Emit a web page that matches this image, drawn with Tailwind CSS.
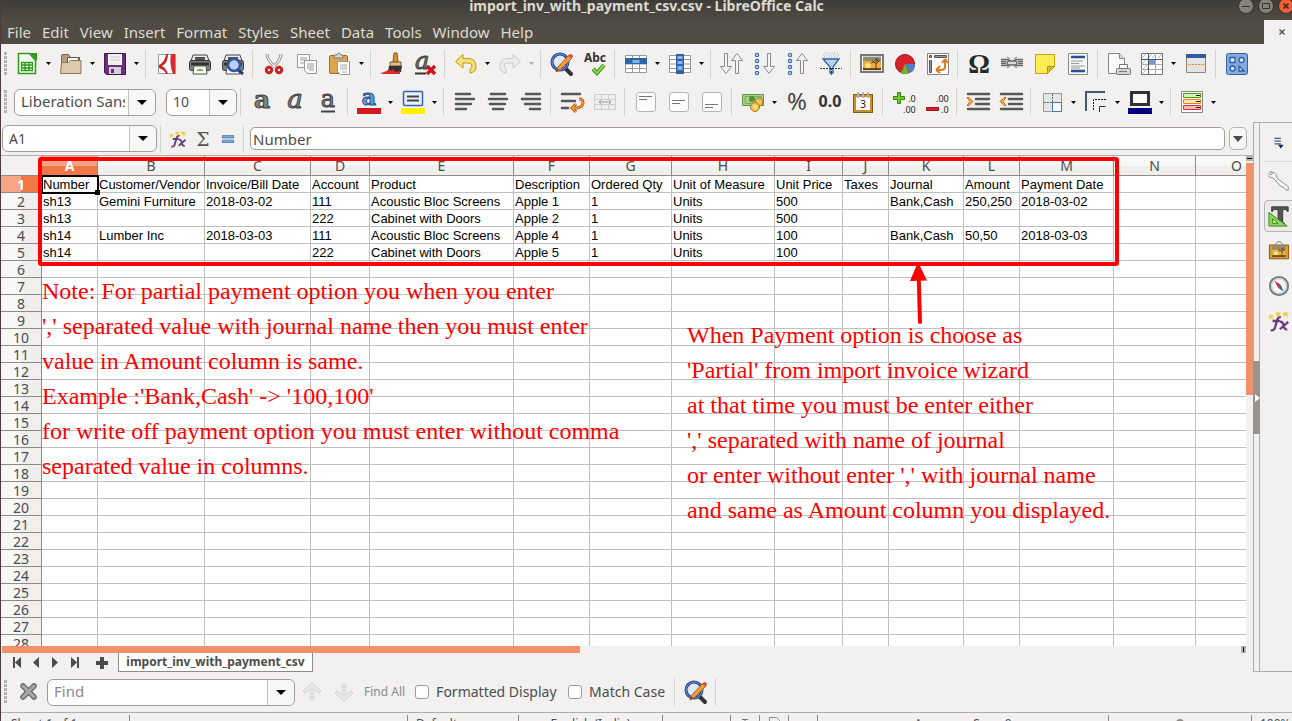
<!DOCTYPE html>
<html lang="en">

<head>
    <meta charset="UTF-8">
    <meta name="viewport" content="width=device-width, initial-scale=1.0">
    <title>import_inv_with_payment_csv.csv - LibreOffice Calc</title>
    <script src="https://cdn.jsdelivr.net/npm/@tailwindcss/browser@4"></script>
</head>

<body class="h-screen overflow-hidden flex flex-col border-l border-[#4b3a3e] bg-[#f2f1f0] font-['Noto_Sans',sans-serif] text-sm text-[#4c4c4c]">
    <!-- Window title -->
    <header class="relative h-5 shrink-0 bg-linear-to-b from-[#3d3c38] to-[#504c44]">
        <h1 class="text-center leading-3 font-bold text-[#dfdbd2]">import_inv_with_payment_csv.csv - LibreOffice Calc</h1>
        <div class="absolute -top-0.5 -right-0.5 flex gap-1">
            <button aria-label="Minimize" class="size-4"><svg viewBox="0 0 16 16"><circle cx="8" cy="8" r="7.5" fill="#85827a" stroke="#33322e"/><path d="M4 8.5h8" stroke="#33322e"/></svg></button>
            <button aria-label="Maximize" class="size-4"><svg viewBox="0 0 16 16"><circle cx="8" cy="8" r="7.5" fill="#85827a" stroke="#33322e"/><path d="M4.5 5.5h7v5h-7z" fill="none" stroke="#33322e"/></svg></button>
            <button aria-label="Close" class="size-4"><svg viewBox="0 0 16 16"><circle cx="8" cy="8" r="7.5" fill="#ee5f33" stroke="#33322e"/><path d="M5.500 5.500l5 5m0-5l-5 5" stroke="#3a2018" stroke-width="1.500"/></svg></button>
        </div>
    </header>

    <!-- Menu bar -->
    <nav class="flex h-6 shrink-0 items-center bg-[#504c44] text-[#dfdbd2]">
        <div class="flex flex-1 gap-[11px] pt-0.5 pl-1.5 text-[15px]">
            <a href="#">File</a>
            <a href="#">Edit</a>
            <a href="#">View</a>
            <a href="#">Insert</a>
            <a href="#">Format</a>
            <a href="#">Styles</a>
            <a href="#">Sheet</a>
            <a href="#">Data</a>
            <a href="#">Tools</a>
            <a href="#">Window</a>
            <a href="#">Help</a>
        </div>
        <button aria-label="Close document" class="flex h-full w-7 items-center justify-center bg-[#f2f1f0] pl-2"><svg class="size-2" viewBox="0 0 8 8"><path d="M1.500 1.500l5 5m0-5l-5 5" stroke="#4c4c4c" stroke-width="1.300"/></svg></button>
    </nav>

    <!-- Standard toolbar -->
    <div class="flex h-[39px] shrink-0 items-center pl-[3px]">
        <i class="mr-[3px] h-6 w-[3px] bg-[repeating-linear-gradient(#b5b3b0_0_3px,transparent_3px_4px)]"></i>
        <div id="standard" class="flex items-center"></div>
    </div>

    <!-- Formatting toolbar -->
    <div class="flex h-[38px] shrink-0 items-center pl-[3px]">
        <i class="mr-[7px] h-6 w-[3px] bg-[repeating-linear-gradient(#b5b3b0_0_3px,transparent_3px_4px)]"></i>
        <div class="mr-2.5 flex h-[27px] w-[142px] rounded-md border border-[#a19e99] bg-white">
            <input aria-label="Font name" value="Liberation Sans" class="ml-1.5 w-[104px] min-w-0 text-[15px] outline-none">
            <button aria-label="Choose font" class="ml-auto flex w-[27px] items-center justify-center rounded-r-md border-l border-[#c4c2be] bg-[#f7f7f6]"><svg class="h-[5px] w-2.5" viewBox="0 0 10 5"><path d="M0 0h10L5 5z"/></svg></button>
        </div>
        <div class="flex h-[27px] w-[71px] rounded-md border border-[#a19e99] bg-white">
            <input aria-label="Font size" value="10" class="ml-1.5 w-[34px] min-w-0 outline-none">
            <button aria-label="Choose size" class="ml-auto flex w-[27px] items-center justify-center rounded-r-md border-l border-[#c4c2be] bg-[#f7f7f6]"><svg class="h-[5px] w-2.5" viewBox="0 0 10 5"><path d="M0 0h10L5 5z"/></svg></button>
        </div>
        <div id="formatting" class="flex items-center"></div>
    </div>

    <div class="mt-px flex min-h-0 flex-1">
        <main class="flex min-w-0 flex-1 flex-col">
            <!-- Formula bar -->
            <div class="flex h-[33px] shrink-0 items-center pl-px">
                <div class="flex h-[27px] w-[155px] rounded-md border border-[#a19e99] bg-white">
                    <input aria-label="Name box" value="A1" class="ml-1.5 w-[116px] min-w-0 outline-none">
                    <button aria-label="Choose range" class="ml-auto flex w-[27px] items-center justify-center rounded-r-md border-l border-[#c4c2be] bg-[#f7f7f6]"><svg class="h-[5px] w-2.5" viewBox="0 0 10 5"><path d="M0 0h10L5 5z"/></svg></button>
                </div>
                <div id="formula" class="mr-0.5 flex items-center"></div>
                <input aria-label="Formula" value="Number" class="mr-1 h-[23px] min-w-0 flex-1 rounded-[5px] border border-[#a19e99] bg-white px-0.5 text-[15px]">
                <button aria-label="Expand formula bar" class="mr-1.5 flex h-[23px] w-[18px] items-center justify-center rounded-[5px] border border-[#b5b3b0] bg-[#f7f7f6]"><svg class="h-1.5 w-2.5" viewBox="0 0 10 6"><path d="M0 0h10L5 6z" fill="#4c4c4c"/></svg></button>
            </div>

            <!-- Spreadsheet -->
            <div class="flex min-h-0 flex-1 border-t border-[#b0aeab]">
                <div class="relative min-w-0 flex-1 overflow-hidden bg-white">
                    <table class="w-[1277px] table-fixed border-separate border-spacing-0">
                        <colgroup>
                            <col class="w-[41px]">
                            <col class="w-[56px]">
                            <col class="w-[107px]">
                            <col class="w-[106px]">
                            <col class="w-[59px]">
                            <col class="w-[144px]">
                            <col class="w-[76px]">
                            <col class="w-[82px]">
                            <col class="w-[103px]">
                            <col class="w-[68px]">
                            <col class="w-[46px]">
                            <col class="w-[75px]">
                            <col class="w-[56px]">
                            <col class="w-[94px]">
                            <col class="w-[82px]">
                            <col class="w-[82px]">
                        </colgroup>
                        <thead>
                            <tr id="letters"></tr>
                        </thead>
                        <tbody id="cells" class="font-['Liberation_Sans',Arial,sans-serif] text-[13px] text-black"></tbody>
                    </table>

                    <!-- Cell cursor -->
                    <div class="absolute top-[19px] left-10 h-[19px] w-[58px] border-2 border-black"></div>
                    <div class="absolute top-[34px] left-[94px] size-[5px] bg-black"></div>

                    <!-- Notes drawn over the sheet -->
                    <div class="absolute top-px left-[37px] h-[109px] w-[1081px] rounded-[3px] border-4 border-[#f00]"></div>
                    <svg class="absolute top-[106px] left-[909px] h-[62px] w-[17px]" viewBox="0 0 17 62" fill="#f00"><path d="M8 0L17 18.500L0 19z"/><path d="M8.700 15L10 60" stroke="#f00" stroke-width="4" stroke-linecap="round"/></svg>
                    <p class="absolute top-[118px] left-[41px] font-['Liberation_Serif',serif] text-2xl leading-[35px] whitespace-nowrap text-[#f00]">
                        Note: For partial payment option you when you enter<br>
                        ',' separated value with journal name then you must enter<br>
                        value in Amount column is same.<br>
                        Example :'Bank,Cash' -&gt; '100,100'<br>
                        for write off payment option you must enter without comma<br>
                        separated value in columns.
                    </p>
                    <p class="absolute top-[162px] left-[686px] font-['Liberation_Serif',serif] text-2xl leading-[35px] whitespace-nowrap text-[#f00]">
                        When Payment option is choose as<br>
                        'Partial' from import invoice wizard<br>
                        at that time you must be enter either<br>
                        ',' separated with name of journal<br>
                        or enter without enter ',' with journal name<br>
                        and same as Amount column you displayed.
                    </p>
                </div>
                <!-- Vertical scrollbar -->
                <div class="flex w-[7px] flex-col">
                    <i class="flex h-[5px] items-center justify-center bg-[#b5b3b0]"><b class="h-px w-[5px] bg-black"></b></i>
                    <i class="mt-0.5 h-[232px] bg-[#f29069]"></i>
                </div>
            </div>

            <!-- Horizontal scrollbar -->
            <div class="flex h-[7px] shrink-0 items-center justify-between pr-[7px] pl-px">
                <i class="h-full w-[578px] bg-[#f29069]"></i>
                <i class="flex h-full w-[5px] items-center justify-center bg-[#b5b3b0]"><b class="h-[5px] w-px bg-black"></b></i>
            </div>

            <!-- Sheet tabs -->
            <div class="flex h-[19px] shrink-0 items-center pl-[11px]">
                <div class="flex items-center gap-2">
                    <button aria-label="First sheet" class="size-[11px]"><svg viewBox="0 0 11 11" fill="#4c4c4c"><path d="M1 0h2v11H1zM9 0v11L3 5.500z"/></svg></button>
                    <button aria-label="Previous sheet" class="size-[11px]"><svg viewBox="0 0 11 11" fill="#4c4c4c"><path d="M8 0v11L2 5.500z"/></svg></button>
                    <button aria-label="Next sheet" class="size-[11px]"><svg viewBox="0 0 11 11" fill="#4c4c4c"><path d="M2 0v11L8 5.500z"/></svg></button>
                    <button aria-label="Last sheet" class="size-[11px]"><svg viewBox="0 0 11 11" fill="#4c4c4c"><path d="M8 0h2v11H8zM2 0v11L8 5.500z"/></svg></button>
                </div>
                <button aria-label="Add sheet" class="mr-2.5 ml-4 size-3"><svg viewBox="0 0 12 12" fill="#4c4c4c"><path d="M4 0h4v4h4v4H8v4H4V8H0V4h4z"/></svg></button>
                <button class="h-full w-[195px] border border-t-0 border-[#8e8b87] bg-white text-xs leading-4 font-bold">import_inv_with_payment_csv</button>
            </div>
        </main>

        <!-- Sidebar -->
        <div class="relative flex w-[7px] shrink-0 items-center border-x border-t border-b border-[#b0aeab] bg-[#f2f1f0]">
            <button aria-label="Hide sidebar" class="absolute top-[238px] -left-px flex h-[73px] w-[7px] items-center justify-end bg-[#98948e]"><svg class="h-2 w-[5px]" viewBox="0 0 5 8"><path d="M0 0l5 4l-5 4z" fill="#fff"/></svg></button>
        </div>
        <aside id="sidebar" class="flex w-8 shrink-0 flex-col gap-[3px] border-t border-b border-[#b0aeab] pl-1"></aside>
    </div>

    <!-- Find toolbar -->
    <div class="flex h-10 shrink-0 items-center pl-[3px]">
        <i class="mr-3 h-6 w-[3px] bg-[repeating-linear-gradient(#b5b3b0_0_3px,transparent_3px_4px)]"></i>
        <button aria-label="Close find bar" class="mr-2 size-5"><svg viewBox="0 0 20 20"><path d="M4 4l11 11m0-11l-11 11" stroke="#666" stroke-width="5.500" stroke-linecap="round"/><path d="M4 4l11 11m0-11l-11 11" stroke="#aaa" stroke-width="3" stroke-linecap="round"/></svg></button>
        <div class="flex h-[27px] w-[248px] rounded-md border border-[#a19e99] bg-white">
            <input aria-label="Find" placeholder="Find" class="ml-1.5 min-w-0 flex-1 text-[15px] outline-none placeholder:text-[#8b8b8b]">
            <button aria-label="Find history" class="flex w-[27px] items-center justify-center rounded-r-md border-l border-[#c4c2be] bg-[#f7f7f6]"><svg class="h-[5px] w-2.5" viewBox="0 0 10 5"><path d="M0 0h10L5 5z"/></svg></button>
        </div>
        <button aria-label="Find previous" class="ml-[7px] size-5"><svg viewBox="0 0 20 20" fill="none" stroke="#d3d1ce"><path d="M10 1l9 8-2 2-7-5-7 5-2-2z" fill="#ebeae8"/><path d="M8 10l2-2 2 2v2H8zM8 14h4v2H8zM9 18h2"/></svg></button>
        <button aria-label="Find next" class="ml-3 size-5"><svg viewBox="0 0 20 20" fill="none" stroke="#d3d1ce"><path d="M10 19l9-8-2-2-7 5-7-5-2 2z" fill="#ebeae8"/><path d="M8 10l2 2 2-2V8H8zM8 4h4v2H8zM9 2h2"/></svg></button>
        <button class="mx-2.5 text-xs text-[#8b8b8b]">Find All</button>
        <label class="flex w-[153px] items-center gap-[7px] whitespace-nowrap"><input type="checkbox" class="size-3.5 shrink-0 appearance-none rounded-[3px] border border-[#a19e99] bg-white">Formatted Display</label>
        <label class="flex w-[103px] items-center gap-[7px] whitespace-nowrap"><input type="checkbox" class="size-3.5 shrink-0 appearance-none rounded-[3px] border border-[#a19e99] bg-white">Match Case</label>
        <div id="findtools" class="flex items-center"></div>
    </div>

    <!-- Status bar -->
    <footer class="h-[9px] shrink-0 overflow-hidden border-t border-[#b0aeab] text-xs">
        <div class="flex pt-0.5 leading-[18px] whitespace-nowrap">
            <span class="w-[129px] border-r border-[#8e8b87] pl-2.5">Sheet 1 of 1</span>
            <span class="w-[278px] border-r border-[#8e8b87]"></span>
            <span class="w-[111px] border-r border-[#8e8b87] pl-2">Default</span>
            <span class="w-[144px] border-r border-[#8e8b87] text-center">English (India)</span>
            <span class="w-[68px] border-r border-[#8e8b87]"></span>
            <span class="flex w-[29px] justify-center border-r border-[#8e8b87]"><svg class="mt-1 size-3" viewBox="0 0 12 12"><path d="M3 .5h6M6 0v12" stroke="#777"/></svg></span>
            <span class="flex w-[29px] justify-center border-r border-[#8e8b87]"><svg class="mt-0.5 size-3" viewBox="0 0 12 12"><path d="M1.500 12V.5h7l3 3V12" fill="none" stroke="#8e8b87"/></svg></span>
            <span class="w-[29px] border-r border-[#8e8b87]"></span>
            <span class="flex-1 border-r border-[#8e8b87] text-center">Average: ; Sum: 0</span>
            <span class="flex w-[143px] justify-center border-r border-[#8e8b87]"><svg class="mt-1 size-2" viewBox="0 0 8 8"><circle cx="4" cy="4" r="4" fill="#8e8b87"/></svg></span>
            <span class="w-10 pl-2">100%</span>
        </div>
    </footer>

    <script>
        const lens = '<path d="M16 17l5 5" stroke="#333" stroke-width="4" stroke-linecap="round"/><circle cx="10" cy="10" r="8" fill="#dfe9f5" stroke="#26468f" stroke-width="3"/><circle cx="10" cy="10" r="8" fill="none" stroke="#6e93d6"/><path d="M6 20l2-5L19 3l3 3L11 17z" fill="#f59a35" stroke="#a85c12"/><path d="M18 4l2-2q3 0 3 3l-2 1z" fill="#e24b4b"/><path d="M6 20l1-3 2 1z" fill="#5b3a1a"/>';
        const fx = '<path d="M3 22q4 1 5-4l2-7q1-4 4-3M5 12h8" fill="none" stroke="#6b3d7d" stroke-width="2.500"/><path d="M13 13q3-1 4 4t4 4m1-8l-9 8" fill="none" stroke="#6b3d7d" stroke-width="2.500"/><path d="M3 4l1 2 2 0-1 2 1 2-3-1-2 1 0-3-1-1 2 0zM11 1l1 2h2l-1 2 0 2-2-1-2 1v-2l-1-2h2zM19 1l1 2h3l-2 2 1 3-3-2-2 2v-3l-2-2h3z" fill="#f2d13b"/>';
        const printer = '<path d="M5 3h14l2 6H3z" fill="#e9e9e7" stroke="#444"/><path d="M7 5h10v4H7z" fill="#555"/><rect x="1.500" y="8.500" width="21" height="10" rx="2" fill="#80827e" stroke="#333"/><path d="M3 12h18" stroke="#333" stroke-width="3"/><path d="M6 14h12l1 8H5z" fill="#fafafa" stroke="#555"/><path d="M8 19q4-5 8 0z" fill="#7cb850"/>';
        const landscape = '<path d="M3 4h18v15H3z" fill="#8b8d7a"/><path d="M3 9h18v8H3z" fill="#f2a93a"/><circle cx="8" cy="14" r="3" fill="#ffe680"/><path d="M3 17h18v2H3z" fill="#5b3a14"/><path d="M16 18v-6l-4-4m4 4l4-4m-4 3V6m2 4l-1-4m-3 4l-3 1" stroke="#2d2213" stroke-width=".8" fill="none"/>';
        const lines = (a) => a.map(([x, y, w]) => `<path d="M${x} ${y}h${w}" stroke="#555856" stroke-width="2.500" stroke-linecap="round"/>`).join('');
        const box = (a) => '<rect x="2.500" y="2.500" width="19" height="19" rx="2.500" fill="#fdfdfd" stroke="#b5b4b2"/>' + a.map(([x, y, w]) => `<path d="M${x} ${y}h${w}" stroke="#777"/>`).join('');
        const down = (x) => `<path d="M${x - 1.5} 1.500v13h-4l5.500 7 5.500-7h-4v-13z" fill="#f4f4f3" stroke="#8b8b88"/>`;
        const up = (x) => `<path d="M${x - 1.5} 21.500v-13h-4l5.500-7 5.500 7h-4v13z" fill="#f4f4f3" stroke="#8b8b88"/>`;
        const dots = '<g fill="#e1ebf7" stroke="#3c6cab" stroke-width="1.300"><circle cx="4" cy="3" r="1.600"/><circle cx="4" cy="9" r="1.600"/><circle cx="4" cy="15" r="1.600"/><circle cx="4" cy="21" r="1.600"/></g>';
        const lineGrid = '<path d="M1.500 3.500h21v17h-21zM1 7.500h22M1 12h22M1 16.500h22M8.500 3v18M15.500 3v18" fill="#fff" stroke="#999"/>';

        const icons = {
            'New': '<path d="M3.500 1.500h11l6 7v13h-17z" fill="#fbfffa" stroke="#2c9a17" stroke-width="1.500"/><path d="M15 1h7v8z" fill="#2c9a17"/><path d="M6.500 10.500h11v8h-11zM6 13h12M6 16h12M10 10v9M14 10v9" fill="#fff" stroke="#2c9a17" stroke-width="1.300"/>',
            'Open': '<path d="M2.500 20V3.500q0-1 1-1h6l2 3h9V20z" fill="#b59d7d" stroke="#7b6548"/><path d="M8.500 5.500h11v6h-11z" fill="#fff" stroke="#555"/><path d="M1.500 21.500l1-11h7l2-2h10.500v13z" fill="#dcc9ac" stroke="#8f7858"/>',
            'Save': '<path d="M1.500 1.500h21v21h-19l-2-2z" fill="#6b2f80" stroke="#421453"/><path d="M5 2h14v11H5z" fill="#f2f2f2"/><path d="M7 5h10M7 8h10" stroke="#c8c8c8"/><path d="M6 15h12v7H6z" fill="#d3d3d3"/><path d="M8 17h3v4H8z" fill="#6b2f80"/>',
            'Export as PDF': '<path d="M3.500 2.500h17v19h-17z" fill="#fff" stroke="#999"/><path d="M13 2h-2q-1 8-7 11v3q6 2 7 6h2q-2-6-6-8 6-3 6-12z" fill="#c9232a"/><path d="M16 2h4v20h-2q-4-10-2-20z" fill="#d92a30"/>',
            'Print': printer,
            'Print Preview': printer + '<path d="M17 18l5 4" stroke="#263c75" stroke-width="3"/><circle cx="13" cy="13" r="6" fill="#b9cfe9" stroke="#2f55a8" stroke-width="2.500"/>',
            'Cut': '<path d="M5 2q0 6 8 13M19 2q0 6-8 13" stroke="#8b8b88" stroke-width="3" fill="none"/><path d="M5 2q0 6 8 13M19 2q0 6-8 13" stroke="#f1f1f0" stroke-width="1.300" fill="none"/><g fill="none" stroke="#cf1f26" stroke-width="3"><circle cx="7" cy="18" r="2.700"/><circle cx="17" cy="18" r="2.700"/></g>',
            'Copy': '<g fill="#fcfcfc" stroke="#999"><path d="M2.500 2.500h12v13h-12z"/><path d="M9.500 8.500h12v13h-9l-3-3z"/></g><path d="M5 6h7M5 8h7M5 11h4M12 12h7M12 14h7M12 16h7M14 18h5" stroke="#999"/>',
            'Paste': '<rect x="1.500" y="3.500" width="18" height="18" rx="1.500" fill="#dda550" stroke="#9c6e28"/><path d="M6 6V3h3q2-4 4 0h2v3z" fill="#d8d8d6" stroke="#777"/><path d="M9.500 9.500h12v13h-9l-3-3z" fill="#fff" stroke="#999"/><path d="M12 13h7M12 15h7M12 17h7M14 20h5" stroke="#aaa"/>',
            'Clone Formatting': '<path d="M14 1h3l1 9h-5z" fill="#e0932f" stroke="#8b5510"/><path d="M10 10h11v4H10z" fill="#e6c088" stroke="#7a5a28"/><path d="M9 14h13l-1 6H8z" fill="#333"/><path d="M0 21q6-1 9-4l2 2 2-2 2 3 5-1v3H3z" fill="#d92a30"/>',
            'Clear Formatting': '<text x="2" y="17" font-family="DejaVu Serif" font-style="italic" font-size="24" fill="#6f7270" stroke="#444">a</text><path d="M2 21.500h11" stroke="#333" stroke-width="2"/><path d="M14 14l8 8m0-8l-8 8" stroke="#d0141b" stroke-width="3.500"/>',
            'Undo': '<path d="M1.500 9.500L9 2.500v4h5q8 0 8 8 0 6-6 6.500v-4q2-1 2-3 0-3-4-3H9v5z" fill="#f7e07a" stroke="#b99a12"/>',
            'Redo': '<path d="M22.500 9.500L15 2.500v4h-5q-8 0-8 8 0 6 6 6.500v-4q-2-1-2-3 0-3 4-3h5v5z" fill="#ececeb" stroke="#cbc9c6"/>',
            'Find &amp; Replace': lens,
            'Spelling': '<text x="12" y="10" text-anchor="middle" font-family="Noto Sans" font-weight="bold" font-size="12" fill="#333">Abc</text><path d="M10 17l4 4 7-8" fill="none" stroke="#3a8a1a" stroke-width="4"/><path d="M10 17l4 4 7-8" fill="none" stroke="#8cdc4c" stroke-width="2"/>',
            'Row': lineGrid + '<path d="M1 6h22v6H1z" fill="#2e63a8"/><path d="M8.500 8h7v3h-7z" fill="#86b2e6"/>',
            'Column': lineGrid + '<path d="M8 2h8v20H8z" fill="#2e63a8"/><path d="M9.500 4h5v3h-5zM9.500 9h5v3h-5zM9.500 14h5v4h-5z" fill="#86b2e6"/>',
            'Sort': down(6) + up(17),
            'Sort Ascending': dots + down(16),
            'Sort Descending': dots + up(16),
            'AutoFilter': '<path d="M5 1h14M4 3h16M5 5h14" stroke="#aaa" stroke-dasharray="1 1.500"/><path d="M4 7h16l-6 8v6h-3v-6z" fill="#b8d3f2" stroke="#2f62a6" stroke-width="1.300"/><path d="M1 16.500h22M12.500 16v7" stroke="#333" stroke-dasharray="2 1"/>',
            'Insert Image': '<rect x="1" y="3" width="22" height="17" fill="#fff" stroke="#777" stroke-width="2"/><g transform="translate(0 1) scale(1 .9)">' + landscape + '</g>',
            'Insert Chart': '<circle cx="12" cy="12" r="9.500" fill="#d9222a" stroke="#9b1016"/><path d="M12 12h10q0 7-5 9z" fill="#4f81c8"/><path d="M12 12l4 9q-4 2-8 0z" fill="#69b82e"/>',
            'Pivot Table': '<path d="M1.500 1.500h21v21h-21z" fill="#fff" stroke="#888"/><path d="M3.500 3.500h2v2h-2zM8.500 3.500h12v2h-12zM3.500 8.500h2v12h-2z" fill="#999" stroke="#555"/><path d="M19 9v6q0 3-5 3h-3m8-11l-3 4m3-4l3 4M10 18l4-4m-4 4l4 3" fill="none" stroke="#e27816" stroke-width="2"/>',
            'Special Character': '<text x="12" y="21" text-anchor="middle" font-family="Liberation Serif" font-weight="bold" font-size="27" fill="#222b2b">Ω</text>',
            'Hyperlink': '<g fill="none" stroke="#666" stroke-width="1.300"><path d="M1 7.500h7l3 2M1 13.500h7l3-2M23 7.500h-7l-3 2M23 13.500h-7l-3-2"/><path d="M1 9.500h5M1 11.500h5M18 9.500h5M18 11.500h5"/><rect x="7" y="9" width="10" height="4" rx="2" fill="#ddd"/><path d="M7 16l3-2M17 16l-3-2M7 5l3 2M17 5l-3 2" stroke="#999"/></g>',
            'Comment': '<path d="M2.500 2.500h19v12l-7 7h-12z" fill="#fbec55" stroke="#c7a50d"/><path d="M14.500 21.500v-7h7z" fill="#d6bd25" stroke="#b6930d"/>',
            'Headers and Footers': '<path d="M2.500 1.500h19v21h-19z" fill="#f7f7f7" stroke="#888"/><path d="M5 5h14M5 19h14" stroke="#294f93" stroke-width="2.500"/><path d="M5 9h12M5 11.500h8M5 14h14M5 16h9" stroke="#999"/>',
            'Print Area': '<path d="M1.500 1.500h11l5 5v15h-16z" fill="#fafafa" stroke="#888"/><path d="M12.500 1.500v5h5" fill="#ddd" stroke="#888"/><path d="M12.500 12.500h8v5h-8z" fill="#fff" stroke="#777"/><rect x="9.500" y="16.500" width="14" height="6" rx="1" fill="#d3d5d0" stroke="#777"/><path d="M12 19.500h8" stroke="#777"/>',
            'Freeze': '<path d="M1.500 1.500h21v21h-21z" fill="#fff" stroke="#777"/><path d="M2 6l4-4M2 12L12 2M2 18l6-6M12 6l4-4M18 6l4-4M2 22l6-6" stroke="#9cc0e6"/><path d="M8.500 1v21M15.500 1v21M1 7.500h21M1 12.500h21M1 17.500h21" stroke="#aaa"/><path d="M8.500 1v21M1 7.500h21" stroke="#555"/><path d="M9 8h6v4H9z" fill="#6f9fdb"/>',
            'Split Window': '<path d="M2.500 2.500h19v18h-19z" fill="#e4e5e3" stroke="#888"/><path d="M2 4h20" stroke="#2e5da5" stroke-width="4"/><path d="M2 12.500h20" stroke="#f08a1d" stroke-dasharray="2 1"/>',
            'Draw Functions': '<rect x="1.500" y="1.500" width="21" height="21" rx="2" fill="#84abe0" stroke="#2f62b0"/><g fill="#dce8f8" stroke="#2f5da0" stroke-width="1.300"><path d="M5 5.500h5v5H5zM14 19v-5l5 5z"/><circle cx="16.500" cy="8" r="2.500"/><circle cx="7.500" cy="16.500" r="2.500"/></g>',

            'Bold': '<text x="12" y="18" text-anchor="middle" font-family="DejaVu Serif" font-weight="bold" font-size="25" fill="#7f8280" stroke="#444">a</text>',
            'Italic': '<text x="12" y="18" text-anchor="middle" font-family="DejaVu Serif" font-style="italic" font-size="26" fill="#7f8280" stroke="#444">a</text>',
            'Underline': '<text x="12" y="17" text-anchor="middle" font-family="DejaVu Serif" font-size="24" fill="#7f8280" stroke="#444">a</text><path d="M5 21.500h14" stroke="#444" stroke-width="2"/>',
            'Font Color': '<text x="12" y="15" text-anchor="middle" font-family="DejaVu Serif" font-weight="bold" font-size="22" fill="#6b9ad6" stroke="#264f91">a</text><path d="M0 18h24v6H0z" fill="#d01a20"/>',
            'Highlighting Color': '<rect x="2.500" y="1.500" width="19" height="14" rx="1" fill="#eaf1fa" stroke="#3265aa" stroke-width="1.500"/><path d="M6 6.500h12M6 10.500h12" stroke="#444" stroke-width="2"/><path d="M0 18h24v6H0z" fill="#ffef00"/>',
            'Align Left': lines([[3, 4, 14], [3, 9, 18], [3, 14, 15], [3, 19, 10]]),
            'Center': lines([[5, 4, 14], [3, 9, 18], [4, 14, 15], [7, 19, 10]]),
            'Align Right': lines([[7, 4, 14], [3, 9, 18], [6, 14, 15], [11, 19, 10]]),
            'Wrap Text': lines([[2, 4, 18], [2, 11, 13], [2, 18, 6]]) + '<path d="M19 9q4 0 4 4t-6 5h-5m4-4l-4 4 4 4" fill="none" stroke="#c6610b" stroke-width="3"/><path d="M19 9q4 0 4 4t-6 5h-5m4-4l-4 4 4 4" fill="none" stroke="#fbb35c"/>',
            'Merge Cells': '<path d="M1.500 4.500h21v15h-21zM1 9.500h22M1 14.500h22M8.500 4v5M15.500 4v5M8.500 15v5M15.500 15v5" fill="#eee" stroke="#cfcecc"/><path d="M6 12h12M8 10l-2 2 2 2M16 10l2 2-2 2" fill="none" stroke="#999"/>',
            'Align Top': box([[5, 6.500, 13], [5, 9.500, 8]]),
            'Center Vertically': box([[5, 10.500, 13], [5, 13.500, 8]]),
            'Align Bottom': box([[5, 14.500, 13], [5, 17.500, 8]]),
            'Currency': '<path d="M1.500 4.500h21v11h-21z" fill="#a8d18d" stroke="#5b9840"/><path d="M4 6.500h16v7H4z" fill="none" stroke="#74ad57"/><circle cx="11" cy="9" r="3" fill="#568d3d"/><g fill="#edc654" stroke="#a37b16"><circle cx="18" cy="12" r="4"/><circle cx="14" cy="17" r="4.500"/></g><circle cx="14" cy="17" r="2" fill="#f9e392"/>',
            'Percent': '<text x="12" y="20" text-anchor="middle" font-family="Noto Sans" font-size="24" fill="#444">%</text>',
            'Number': '<text x="12" y="17" text-anchor="middle" font-family="Noto Sans" font-weight="bold" font-size="16" fill="#333">0.0</text>',
            'Date': '<rect x="2.500" y="4.500" width="19" height="18" fill="#cc8f30" stroke="#80591b"/><path d="M5 7h14v13H5z" fill="#fafafa"/><path d="M7 2v6M12 2v6M17 2v6" stroke="#777" stroke-width="2"/><path d="M7 2v6M12 2v6M17 2v6" stroke="#eee"/><text x="12" y="18" text-anchor="middle" font-family="Noto Sans" font-size="10" fill="#222">3</text>',
            'Add Decimal Place': '<path d="M5.500 2.500h3v4h4v3h-4v4h-3v-4h-4v-3h4z" fill="#73c92b" stroke="#37850c"/><g font-family="Noto Sans" font-size="9" fill="#222"><text x="16" y="12">.0</text><text x="11" y="23">.00</text></g>',
            'Delete Decimal Place': '<path d="M1.500 17.500h12v3h-12z" fill="#d9222a" stroke="#9b1016"/><g font-family="Noto Sans" font-size="9" fill="#222"><text x="11" y="12">.00</text><text x="16" y="23">.0</text></g>',
            'Increase Indent': lines([[2, 4, 21], [10, 9, 13], [10, 14, 13], [2, 19, 21]]) + '<path d="M1 7.500h2l4 4-4 4H1l3-4z" fill="#f8b15d" stroke="#cf6b12"/>',
            'Decrease Indent': lines([[2, 4, 21], [10, 9, 13], [10, 14, 13], [2, 19, 21]]) + '<path d="M7 7.500H5l-4 4 4 4h2l-3-4z" fill="#f8b15d" stroke="#cf6b12"/>',
            'Borders': '<path d="M3.500 3.500h18v18h-18z" fill="#e5e7e5" stroke="#999"/><path d="M12.500 12.500h9v9h-9z" fill="#fff" stroke="#4a76b4"/><path d="M12.500 4v8M4 12.500h8" stroke="#666" stroke-dasharray="2 1"/>',
            'Border Style': '<path d="M2 21V2h19" fill="none" stroke="#3d5878" stroke-width="2"/><path d="M9.500 20V9.500h13" fill="none" stroke="#111" stroke-dasharray="2 1"/><path d="M15.500 22v-5.500h6" fill="none" stroke="#333"/>',
            'Border Color': '<path d="M3.500 2.500h17v12h-17z" fill="#fafafa" stroke="#333" stroke-width="3"/><path d="M0 18h24v6H0z" fill="#000080"/>',
            'Conditional': '<path d="M1.500 1.500h21v21h-21z" fill="#fafafa" stroke="#888"/><path d="M3.500 3.500h17v4h-17z" fill="#d9f0c5" stroke="#4b9a14"/><path d="M3.500 9.500h17v4h-17z" fill="#ffe3b8" stroke="#ef8210"/><path d="M3.500 15.500h17v4h-17z" fill="#f8b8bb" stroke="#dc3038"/><path d="M16 5.500h4M16 11.500h4M16 17.500h4" stroke="#222"/>',

            'Function Wizard': fx,
            'Sum': '<text x="12" y="21" text-anchor="middle" font-family="DejaVu Serif" font-size="25" fill="#555">Σ</text>',
            'Function': '<path d="M4.500 7.500h15v3h-15zM4.500 13.500h15v3h-15z" fill="#8db2e3" stroke="#2f62a6"/>',

            'Sidebar Settings': '<path d="M7 8h7M7 11h7M7 14h7" stroke="#45587e" stroke-width="1.300"/><path d="M11 15h6l-3 4z" fill="#152249"/>',
            'Properties': '<path d="M2 2l5 1 2 2 1 4 9 7q4 1 3 6l-2 0-3-3-3-1-8-9-4-1-2-2-1-4 3 3h2l1-2z" fill="#f5f5f3" stroke="#888a85"/>',
            'Styles': '<path d="M4 2h18v5h-1l-1-2h-4v14l2 1v1H9v-1l2-1V5H6L5 7H4z" fill="#555" stroke="#333"/><path d="M1 8l20 15H1z" fill="#90d260" stroke="#368613"/><path d="M5 15l6 5H5z" fill="#d8f0c4" stroke="#368613"/>',
            'Gallery': '<path d="M8 5q4-7 8 0" fill="none" stroke="#777"/><path d="M1.500 5.500h21v15h-21z" fill="#d99a38" stroke="#80510d"/><g transform="translate(2 4) scale(.83 .75)">' + landscape + '</g>',
            'Navigator': '<circle cx="12" cy="12" r="10" fill="#eef0f2" stroke="#777" stroke-width="2"/><circle cx="12" cy="12" r="8" fill="#f7f8f9" stroke="#bbb"/><path d="M7 6l7 5-3 3z" fill="#d9222a"/><path d="M17 18l-6-4 3-3z" fill="#2f62a6"/>',
            'Functions': fx,
        };

        // "+" adds a drop-down arrow after the button, "|" is a separator
        const toolbars = {
            standard: 'New+,Open+,Save+,|,Export as PDF,Print,Print Preview,|,Cut,Copy,Paste+,|,Clone Formatting,Clear Formatting,|,Undo+,Redo+,|,Find &amp; Replace,Spelling,|,Row+,Column+,|,Sort,Sort Ascending,Sort Descending,AutoFilter,|,Insert Image,Insert Chart,Pivot Table,|,Special Character,Hyperlink,Comment,Headers and Footers,|,Print Area,Freeze+,Split Window,|,Draw Functions',
            formatting: '|,Bold,Italic,Underline,|,Font Color+,Highlighting Color+,|,Align Left,Center,Align Right,|,Wrap Text,Merge Cells,|,Align Top,Center Vertically,Align Bottom,|,Currency+,Percent,Number,Date,|,Add Decimal Place,Delete Decimal Place,|,Increase Indent,Decrease Indent,|,Borders+,Border Style+,Border Color+,|,Conditional+',
            findtools: '|,Find &amp; Replace,|',
        };
        const separator = '<i class="mx-[3px] h-7 w-0.5 border-l border-[#d5d3d0]"></i>';

        for (const [id, items] of Object.entries(toolbars)) {
            document.getElementById(id).innerHTML = items.split(',').map((item) => {
                if (item === '|') return separator;
                const name = item.replace('+', '');
                let html = `<button aria-label="${name}" class="flex w-[33px] justify-center"><svg class="size-6 overflow-visible" viewBox="0 0 24 24">${icons[name]}</svg></button>`;
                if (item.endsWith('+')) {
                    const fill = name === 'Redo' ? '#aaa' : '#000';
                    html += `<button aria-label="${name} options" class="flex w-[11px] justify-center"><svg class="h-[3px] w-[5px]" viewBox="0 0 5 3"><path d="M0 0h5L2.500 3z" fill="${fill}"/></svg></button>`;
                }
                return html;
            }).join('');
        }

        document.getElementById('formula').innerHTML = separator + ['Function Wizard', 'Sum', 'Function'].map((name) =>
            `<button aria-label="${name}" class="flex w-[25px] justify-center"><svg class="size-[18px] overflow-visible" viewBox="0 0 24 24">${icons[name]}</svg></button>`
        ).join('') + separator;

        document.getElementById('sidebar').innerHTML = ['Sidebar Settings', 'Properties', 'Styles', 'Gallery', 'Navigator', 'Functions'].map((name) => {
            const look = {
                'Sidebar Settings': 'flex h-[39px] w-8 items-center border-b border-[#dcdad8] pl-1',
                'Styles': 'flex h-8 w-8 items-center rounded-[4px] border border-[#b5b3b0] bg-[#ebeae8] pl-[3px]',
            }[name] || 'flex h-8 w-8 items-center pl-1';
            return `<button aria-label="${name}" class="${look}"><svg class="size-[22px] shrink-0" viewBox="0 0 24 24">${icons[name]}</svg></button>`;
        }).join('');

        // Sheet contents
        const rows = [
            ['Number', 'Customer/Vendor', 'Invoice/Bill Date', 'Account', 'Product', 'Description', 'Ordered Qty', 'Unit of Measure', 'Unit Price', 'Taxes', 'Journal', 'Amount', 'Payment Date'],
            ['sh13', 'Gemini Furniture', '2018-03-02', '111', 'Acoustic Bloc Screens', 'Apple 1', '1', 'Units', '500', '', 'Bank,Cash', '250,250', '2018-03-02'],
            ['sh13', '', '', '222', 'Cabinet with Doors', 'Apple 2', '1', 'Units', '500'],
            ['sh14', 'Lumber Inc', '2018-03-03', '111', 'Acoustic Bloc Screens', 'Apple 4', '1', 'Units', '100', '', 'Bank,Cash', '50,50', '2018-03-03'],
            ['sh14', '', '', '222', 'Cabinet with Doors', 'Apple 5', '1', 'Units', '100'],
        ];
        const letters = [...'ABCDEFGHIJKLMNO'];

        document.getElementById('letters').innerHTML = '<th class="border-r border-b border-[#8e8b87] bg-[#f2f1f0]"></th>' + letters.map((letter, i) => {
            const look = i === 0
                ? 'bg-linear-to-b from-[#f5a585] from-50% to-[#f07746] to-50% font-bold text-white'
                : 'bg-linear-to-b from-[#f8f8f7] from-50% to-[#f0efed] to-50% font-normal';
            return `<th class="h-5 border-r border-b border-[#8e8b87] p-0 leading-[19px] ${look}">${letter}</th>`;
        }).join('');

        let body = '';
        for (let r = 0; r < 28; r++) {
            const look = r === 0
                ? 'bg-linear-to-r from-[#f5a585] from-50% to-[#f07746] to-50% font-bold text-white'
                : 'bg-linear-to-r from-[#f8f8f7] from-50% to-[#f0efed] to-50% font-normal text-[#4c4c4c]';
            body += `<tr><th class="h-[17px] border-r border-b border-[#8e8b87] px-0 pt-0.5 pb-0 font-['Noto_Sans',sans-serif] text-sm leading-[14px] ${look}">${r + 1}</th>`;
            body += letters.map((_, c) => `<td class="h-[17px] border-r border-b border-[#c0c0c0] pt-0.5 pr-0 pb-0 pl-px leading-[14px] whitespace-nowrap">${(rows[r] || [])[c] || ''}</td>`).join('') + '</tr>';
        }
        document.getElementById('cells').innerHTML = body;
    </script>
</body>

</html>
